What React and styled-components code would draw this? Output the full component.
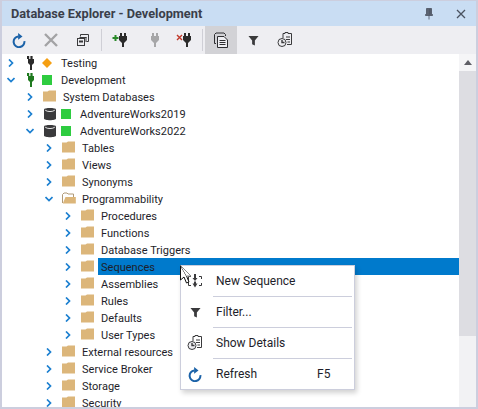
import React from 'react';
import styled, { createGlobalStyle } from 'styled-components';

const Global = createGlobalStyle`
  html, body { margin: 0; padding: 0; background: #fff; }
  body { font-family: Roboto, "Open Sans", "Liberation Sans", sans-serif; font-size: 12px; color: #1e1e2a; }
`;

const Panel = styled.div`
  position: relative;
  width: 478px;
  height: 409px;
  box-sizing: border-box;
  border: 2px solid #cccede;
  border-top-width: 1px;
  display: flex;
  flex-direction: column;
  overflow: hidden;
`;

const TitleBar = styled.div`
  height: 25px;
  flex: none;
  background: #c9ddf3;
  display: flex;
  align-items: center;
  padding: 0 7px 0 9px;
`;

const Title = styled.div`
  flex: 1;
  font-weight: 700;
  font-size: 12.75px;
  color: #3b3f4a;
  white-space: nowrap;
  padding-bottom: 1px;
`;

const TitleButton = styled.div`
  width: 16px;
  height: 16px;
  margin-left: 16px;
  display: flex;
  align-items: center;
  justify-content: center;
`;

const Toolbar = styled.div`
  height: 28px;
  flex: none;
  background: #eeeef2;
  display: flex;
  padding-left: 1px;
`;

const ToolButton = styled.div`
  width: 32px;
  height: 28px;
  display: flex;
  align-items: center;
  justify-content: center;
  background: ${p => (p.$active ? '#d2d2d6' : 'transparent')};
`;

const ToolSep = styled.div`
  width: 1px;
  height: 22px;
  align-self: center;
  background: #cfcfd6;
  margin: 0 ${p => p.$right}px 0 ${p => p.$left}px;
`;

const Body = styled.div`
  flex: 1;
  min-height: 0;
  display: flex;
`;

const Tree = styled.div`
  flex: 1;
  min-width: 0;
  overflow: hidden;
  font-size: 11px;
  letter-spacing: 0.02px;
`;

const Row = styled.div`
  height: 17px;
  display: flex;
  align-items: center;
  padding-left: ${p => 3 + p.$depth * 19}px;
  white-space: nowrap;
`;

const Expander = styled.div`
  width: 12px;
  margin-right: 7px;
  padding-top: 1px;
  display: flex;
  justify-content: center;
  flex: none;
`;

const IconBox = styled.div`
  width: 14px;
  height: 17px;
  flex: none;
  display: flex;
  align-items: center;
  justify-content: center;
`;

const Status = styled.div`
  width: 10px;
  height: 10px;
  flex: none;
  margin: 0 3px 0 4px;
  display: flex;
  align-items: center;
  justify-content: center;
`;

const Label = styled.div`
  flex: ${p => (p.$selected ? 1 : 'none')};
  height: 17px;
  line-height: 19px;
  margin-left: 3px;
  padding-left: 3px;
  background: ${p => (p.$selected ? '#007acc' : 'transparent')};
`;

const FolderShape = styled.svg`
  margin-bottom: 2px;
`;

const Scrollbar = styled.div`
  width: 17px;
  flex: none;
  display: flex;
  flex-direction: column;
  background: #f2f2f4;
`;

const ScrollButton = styled.div`
  height: 17px;
  flex: none;
  background: #f5f5f7;
  display: flex;
  align-items: center;
  justify-content: center;
`;

const Thumb = styled.div`
  height: 265px;
  background: #dddde2;
`;

const Menu = styled.div`
  position: absolute;
  left: 178px;
  top: 264px;
  width: 175px;
  box-sizing: border-box;
  background: #fff;
  border: 1px solid #cccedc;
  box-shadow: 2px 3px 5px rgba(0, 0, 0, 0.18);
  z-index: 2;
`;

const MenuItem = styled.div`
  height: 30px;
  line-height: 32px;
  display: flex;
  align-items: center;
`;

const MenuIcon = styled.div`
  width: 35px;
  display: flex;
  justify-content: center;
  padding-right: 7px;
  box-sizing: border-box;
  flex: none;
`;

const MenuText = styled.div`
  width: 101px;
`;

const MenuSep = styled.div`
  height: 1px;
  margin: 0 2px 0 32px;
  background: #cccedc;
`;

const Cursor = styled.svg`
  position: absolute;
  left: 178px;
  top: 264px;
  z-index: 3;
`;

const Chevron = ({ open }) => (
  <svg width="8" height="8" viewBox="0 0 8 8">
    {open
      ? <path d="M0.5 2 L4 5.5 L7.5 2" fill="none" stroke="#1b7fd0" strokeWidth="1.7" />
      : <path d="M2 0.5 L5.5 4 L2 7.5" fill="none" stroke="#1b7fd0" strokeWidth="1.7" />}
  </svg>
);

const Folder = () => (
  <FolderShape width="14" height="12" viewBox="0 0 14 12">
    <path d="M0 1.5 H4.5 L6 0.5 H13 V11.5 H0 Z" fill="#dcb67a" />
  </FolderShape>
);

const OpenFolder = () => (
  <FolderShape width="14" height="12" viewBox="0 0 14 12">
    <path d="M0.5 11 V2.5 L2 1 H5 L6 2 H11.5 V5" fill="none" stroke="#b09a78" strokeWidth="1" />
    <path d="M0.8 11.5 L3.5 5 H13.8 V11.5 Z" fill="#dcb67a" />
  </FolderShape>
);

const Database = () => (
  <svg width="12" height="14" viewBox="0 0 12 14">
    <path d="M0 2.5 C0 0.5 12 0.5 12 2.5 V11.5 C12 13.8 0 13.8 0 11.5 Z" fill="#3a3a3c" />
    <path d="M1.2 3.2 C3 5 9 5 10.8 3.2" fill="none" stroke="#e8e8e8" strokeWidth="1" />
  </svg>
);

const Plug = ({ color = '#2b2b2b', mark }) => (
  <svg width="18" height="14" viewBox="0 0 18 14">
    <path d="M8 0 H10 V3 H12 V0 H14 V3 H15 V7 L12 10 V14 H10 V10 L7 7 V3 H8 Z" fill={color} />
    {mark === 'plus' && <path d="M2.5 2 h2 v2 h2 v2 h-2 v2 h-2 V6 h-2 V4 h2 Z" fill="#2a8a2a" />}
    {mark === 'cross' && <path d="M1 2 L6 7 M6 2 L1 7" stroke="#c0392b" strokeWidth="1.4" />}
  </svg>
);

const TreePlug = ({ color }) => (
  <svg width="14" height="14" viewBox="0 0 14 14">
    <path d="M3 0 h2.2 v3 h1.2 V0 h2.2 v3 H10 v4 l-2 2 v5 H6 V9 L4 7 V3 H3 Z" fill={color} />
  </svg>
);

const Refresh = () => (
  <svg width="14" height="15" viewBox="0 0 14 15">
    <path d="M12.4 8.2 A5.4 5.4 0 1 1 6.3 3.4" fill="none" stroke="#1b62a8" strokeWidth="2" />
    <path d="M6.1 0 L10.5 3.4 L6.1 6.8 Z" fill="#1b62a8" />
  </svg>
);

const Cancel = () => (
  <svg width="14" height="14" viewBox="0 0 14 14">
    <path d="M1 1 L13 13 M13 1 L1 13" stroke="#a3a3a5" strokeWidth="2.4" />
  </svg>
);

const Windows = () => (
  <svg width="12" height="12" viewBox="0 0 12 12" fill="none" stroke="#3a3a3c">
    <path d="M3.5 2.5 V0.5 H11.5 V7.5 H9.5" />
    <path d="M2.5 3.5 H9.5 M9 3 V8" />
    <rect x="0.5" y="4.5" width="7" height="7" fill="#eeeef2" />
    <path d="M2 7.5 H6" strokeWidth="2" />
  </svg>
);

const Clipboard = () => (
  <svg width="16" height="16" viewBox="0 0 16 16" fill="none" stroke="#2d2d30">
    <path d="M3 11.5 H1.5 V2.5 L3 1 H11 L12.5 2.5 V4" />
    <path d="M4.5 4.5 H11 L14.5 8 V15.5 H4.5 Z" fill="#eeeef2" />
    <path d="M6.5 8.5 H12.5 M6.5 10.5 H12.5 M6.5 12.5 H12.5" />
  </svg>
);

const Funnel = ({ size = 12 }) => (
  <svg width={size} height={size} viewBox="0 0 12 12">
    <path d="M0.5 1 H11.5 L7.5 6 V11.5 L4.5 10 V6 Z" fill="#3a3a3c" />
  </svg>
);

const ClockDoc = () => (
  <svg width="16" height="16" viewBox="0 0 16 16" fill="none" stroke="#3a3a3c">
    <path d="M6 6 V1.5 H8 V0.5 H11 V1.5 H14.5 V12.5 H10" />
    <path d="M9 5 H13 M9 7.5 H13 M10.5 10 H13" />
    <circle cx="5" cy="10.5" r="4" fill="#eeeef2" />
    <path d="M5 8 V10.5 H7.5" strokeWidth="1.4" />
  </svg>
);

const NewItem = () => (
  <svg width="14" height="14" viewBox="0 0 14 14" fill="none" stroke="#3a3a3c">
    <path d="M0.5 2.5 H3 M11 2.5 H13.5 V5 M0.5 2.5 V11.5 H3 M11 11.5 H13.5 V9" />
    <path d="M7 0 V5" strokeWidth="2" />
    <path d="M4.5 4 H9.5 L7 7 Z" fill="#3a3a3c" stroke="none" />
    <path d="M7 7.5 V10" strokeWidth="2" />
    <path d="M4.5 9.5 H9.5 L7 13.5 Z" fill="#3a3a3c" stroke="none" />
  </svg>
);

const rows = [
  { depth: 0, kind: 'plug', color: '#2b2b2b', status: 'diamond', text: 'Testing' },
  { depth: 0, open: true, kind: 'plug', color: '#1f7a1f', status: 'square', text: 'Development' },
  { depth: 1, kind: 'folder', text: 'System Databases' },
  { depth: 1, kind: 'db', status: 'square', text: 'AdventureWorks2019' },
  { depth: 1, open: true, kind: 'db', status: 'square', text: 'AdventureWorks2022' },
  { depth: 2, kind: 'folder', text: 'Tables' },
  { depth: 2, kind: 'folder', text: 'Views' },
  { depth: 2, kind: 'folder', text: 'Synonyms' },
  { depth: 2, open: true, kind: 'open', text: 'Programmability' },
  { depth: 3, kind: 'folder', text: 'Procedures' },
  { depth: 3, kind: 'folder', text: 'Functions' },
  { depth: 3, kind: 'folder', text: 'Database Triggers' },
  { depth: 3, kind: 'folder', text: 'Sequences', selected: true },
  { depth: 3, kind: 'folder', text: 'Assemblies' },
  { depth: 3, kind: 'folder', text: 'Rules' },
  { depth: 3, kind: 'folder', text: 'Defaults' },
  { depth: 3, kind: 'folder', text: 'User Types' },
  { depth: 2, kind: 'folder', text: 'External resources' },
  { depth: 2, kind: 'folder', text: 'Service Broker' },
  { depth: 2, kind: 'folder', text: 'Storage' },
  { depth: 2, kind: 'folder', text: 'Security' },
];

const NodeIcon = ({ row }) => {
  if (row.kind === 'plug') return <TreePlug color={row.color} />;
  if (row.kind === 'db') return <Database />;
  if (row.kind === 'open') return <OpenFolder />;
  return <Folder />;
};

const StatusMark = ({ type }) => (
  <svg width="10" height="10" viewBox="0 0 10 10">
    {type === 'diamond'
      ? <path d="M5 0 L10 5 L5 10 L0 5 Z" fill="#f59f12" />
      : <rect width="10" height="10" fill="#2ecc40" />}
  </svg>
);

export default function App() {
  return (
    <>
      <Global />
      <Panel>
        <TitleBar>
          <Title>Database Explorer - Development</Title>
          <TitleButton>
            <svg width="8" height="12" viewBox="0 0 8 12">
              <path d="M1.5 0.5 H6.5 V6.5 H7.5 V7.5 H0.5 V6.5 H1.5 Z M4 7.5 V11.5 M4.8 1 V6.5" fill="#5a6270" stroke="#4a5260" strokeWidth="0.8" />
            </svg>
          </TitleButton>
          <TitleButton>
            <svg width="10" height="10" viewBox="0 0 10 10">
              <path d="M1 1 L9 9 M9 1 L1 9" stroke="#4a5260" strokeWidth="1.3" />
            </svg>
          </TitleButton>
        </TitleBar>
        <Toolbar>
          <ToolButton><Refresh /></ToolButton>
          <ToolButton><Cancel /></ToolButton>
          <ToolButton><Windows /></ToolButton>
          <ToolSep $left={2} $right={3} />
          <ToolButton><Plug mark="plus" /></ToolButton>
          <ToolButton><Plug color="#a6a6a8" /></ToolButton>
          <ToolButton><Plug mark="cross" /></ToolButton>
          <ToolSep $left={1} $right={2} />
          <ToolButton $active><Clipboard /></ToolButton>
          <ToolButton><Funnel size={11} /></ToolButton>
          <ToolButton><ClockDoc /></ToolButton>
        </Toolbar>
        <Body>
          <Tree>
            {rows.map(row => (
              <Row key={row.text} $depth={row.depth}>
                <Expander><Chevron open={row.open} /></Expander>
                <IconBox><NodeIcon row={row} /></IconBox>
                {row.status && <Status><StatusMark type={row.status} /></Status>}
                <Label $selected={row.selected}>{row.text}</Label>
              </Row>
            ))}
          </Tree>
          <Scrollbar>
            <ScrollButton>
              <svg width="8" height="5" viewBox="0 0 8 5"><path d="M4 0 L8 5 H0 Z" fill="#5f5f66" /></svg>
            </ScrollButton>
            <Thumb />
          </Scrollbar>
        </Body>
        <Menu>
          <MenuItem>
            <MenuIcon><NewItem /></MenuIcon>
            <MenuText>New Sequence</MenuText>
          </MenuItem>
          <MenuSep />
          <MenuItem>
            <MenuIcon><Funnel size={11} /></MenuIcon>
            <MenuText>Filter...</MenuText>
          </MenuItem>
          <MenuSep />
          <MenuItem>
            <MenuIcon><ClockDoc /></MenuIcon>
            <MenuText>Show Details</MenuText>
          </MenuItem>
          <MenuSep />
          <MenuItem>
            <MenuIcon><Refresh /></MenuIcon>
            <MenuText>Refresh</MenuText>
            <span>F5</span>
          </MenuItem>
        </Menu>
        <Cursor width="14" height="20" viewBox="0 0 14 20">
          <path d="M0.5 0.5 V15 L4 12 L6.5 18 L9 17 L6.5 11 Z" fill="#fff" stroke="#111" strokeWidth="1" />
          <path d="M0.5 0.5 L11 11 H6.5" fill="#fff" stroke="#8a8a8a" strokeWidth="1" />
        </Cursor>
      </Panel>
    </>
  );
}
